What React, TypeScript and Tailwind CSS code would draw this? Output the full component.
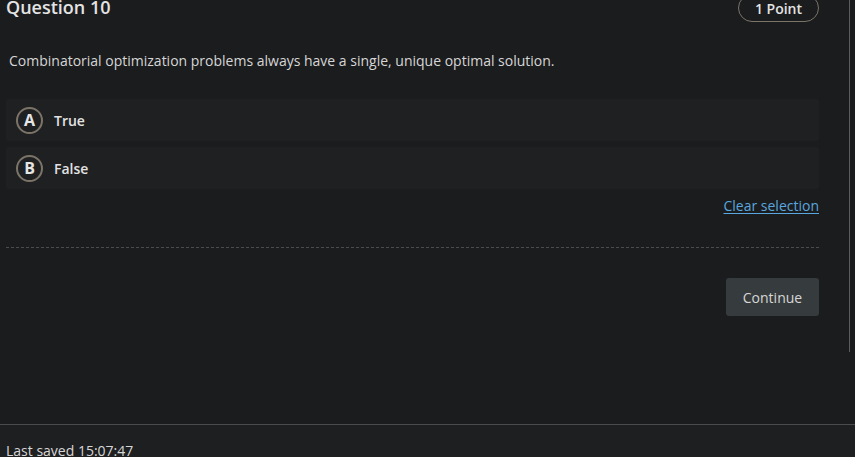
import React from "react";

const FONT = { fontFamily: '"Open Sans", "Noto Sans", sans-serif' };

function Option({ letter, label }: { letter: string; label: string }) {
  return (
    <div className="flex h-[42px] items-center gap-[11px] rounded-[3px] bg-[#1f2022] pl-[10px]">
      <span className="flex h-[27px] w-[27px] items-center justify-center rounded-full border-2 border-[#7c7468] text-[16px] font-bold text-[#e6e6e6]">
        {letter}
      </span>
      <span className="text-[14px] font-semibold text-[#e2e2e2]">{label}</span>
    </div>
  );
}

export default function App() {
  return (
    <div
      className="flex h-[457px] w-[855px] flex-col overflow-hidden bg-[#1b1c1e] text-[#d9d9d9]"
      style={FONT}
    >
      <div className="relative h-[424px] shrink-0">
        {/* scrollbar track */}
        <div className="absolute right-[5px] top-0 h-[352px] w-px bg-[#5a5c60]" />
        <div className="ml-[6px] mr-[36px] -mt-[6px]">
          <div className="flex items-start justify-between">
            <h2 className="pt-[1px] text-[18px] font-semibold leading-[24px] text-[#e4e4e4]">
              Question 10
            </h2>
            <span className="flex h-[28px] w-[81px] items-center justify-center rounded-full border border-[#7c7468] text-[14px] font-semibold text-[#e4e4e4]">
              1 Point
            </span>
          </div>
          <p className="mt-[29px] pl-[3px] text-[14px] leading-[20px] text-[#d6d6d6]">
            Combinatorial optimization problems always have a single, unique optimal solution.
          </p>
          <div className="mt-[28px] flex flex-col gap-[6px]">
            <Option letter="A" label="True" />
            <Option letter="B" label="False" />
          </div>
          <div className="mt-[7px] flex justify-end">
            <a className="cursor-pointer text-[14px] leading-[20px] text-[#5aa7df] underline underline-offset-2">
              Clear selection
            </a>
          </div>
          <div className="mt-[31px] border-t border-dashed border-[#4a4c50]" />
          <div className="mt-[30px] flex justify-end">
            <button className="h-[38px] w-[93px] rounded-[3px] bg-[#363b3d] text-[14px] text-[#d6d6d6]">
              Continue
            </button>
          </div>
        </div>
      </div>
      <div className="flex-1 border-t border-[#4a4c50] bg-[#1e1f21] pl-[6px] pt-[13px]">
        <span className="text-[14px] leading-[20px] text-[#d6d6d6]">Last saved 15:07:47</span>
      </div>
    </div>
  );
}
